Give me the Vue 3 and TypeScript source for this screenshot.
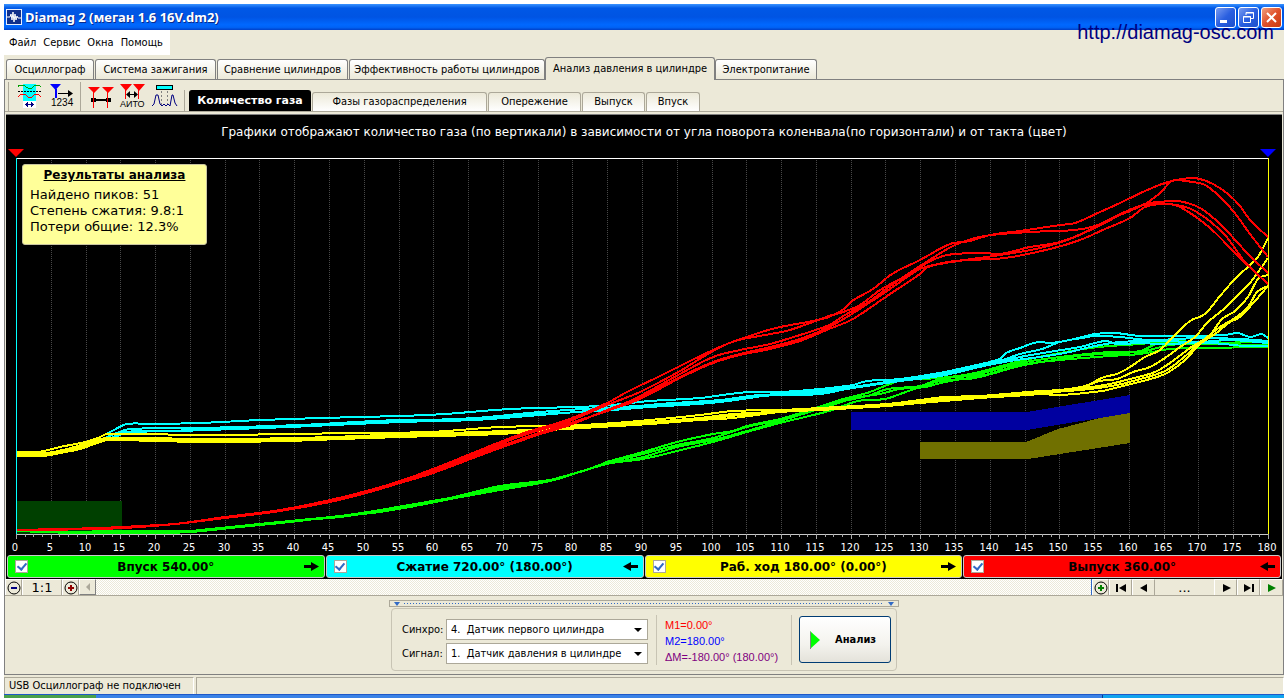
<script setup lang="ts">
import { ref } from 'vue'

type Stroke = { color: string; lines: string[] }

const mainTabs = [
  'Осциллограф',
  'Система зажигания',
  'Сравнение цилиндров',
  'Эффективность работы цилиндров',
  'Анализ давления в цилиндре',
  'Электропитание',
]
const activeMain = ref(4)

const subTabs = ['Количество газа', 'Фазы газораспределения', 'Опережение', 'Выпуск', 'Впуск']
const activeSub = ref(0)

const phases = ref([
  { id: 'intake', label: 'Впуск 540.00°', tone: 'green', forward: true, on: true },
  { id: 'compression', label: 'Сжатие 720.00° (180.00°)', tone: 'cyan', forward: false, on: true },
  { id: 'power', label: 'Раб. ход 180.00° (0.00°)', tone: 'yellow', forward: true, on: true },
  { id: 'exhaust', label: 'Выпуск 360.00°', tone: 'red', forward: false, on: true },
])

const sensors = ['1.\u00a0\u00a0Датчик давления в цилиндре', '4.\u00a0\u00a0Датчик первого цилиндра']
const sync = ref(sensors[1])
const signal = ref(sensors[0])

const degX = (d: number): number => Math.round(16 + (d * 1252) / 180)
const majors = Array.from({ length: 37 }, (_, i) => i * 5)
const minors = Array.from({ length: 144 }, (_, i) => i * 1.25).filter((d) => d % 5 !== 0)

// Smooth curve through the sample points: each tangent is the mean slope of the two neighbours.
function curve(samples: string): string {
  const pts = samples.split(' ').map((p) => p.split(',').map(Number))
  const slope = (i: number): number => {
    const a = pts[Math.max(i - 1, 0)]
    const b = pts[Math.min(i + 1, pts.length - 1)]
    return (b[1] - a[1]) / (b[0] - a[0])
  }
  let d = `M${pts[0][0]} ${pts[0][1]}`
  for (let i = 1; i < pts.length; i++) {
    const [x0, y0] = pts[i - 1]
    const [x1, y1] = pts[i]
    const h = (x1 - x0) / 3
    d += `C${x0 + h} ${y0 + slope(i - 1) * h} ${x1 - h} ${y1 - slope(i) * h} ${x1} ${y1}`
  }
  return d
}

const strokes: Stroke[] = [
  {
    color: '#00ff00',
    lines: [
      '16,531 60,532 120,531 190,531 200,530 240,526 290,521 340,516 380,511 410,507 450,498 500,486 550,480 570,475 600,465 607,462 643,452 677,442 713,434 733,431 747,426 780,419 813,409 843,399 867,393 885,386 903,380 940,378 975,373 1020,361 1060,353 1090,348 1110,346 1140,344 1170,341 1200,342 1230,340 1268,341',
      '16,531 60,532 150,533 190,532 240,527 290,522 340,516 380,512 450,499 500,487 550,481 607,463 643,454 677,445 713,438 747,427 780,420 813,411 830,404 867,396 888,389 920,386 940,379 975,375 1020,363 1060,357 1110,352 1140,352 1170,345 1200,344 1268,345',
      '16,531 80,533 190,532 240,526 290,521 340,516 380,510 450,498 500,489 550,480 607,464 643,457 677,447 713,440 747,431 780,421 829,406 855,398 880,394 900,389 925,387 945,382 985,375 1020,365 1060,360 1110,356 1140,354 1170,349 1200,348 1268,347',
      '190,532 240,527 290,521 340,517 380,511 450,499 500,490 550,481 607,464 643,459 677,451 713,442 747,432 780,423 829,411 858,401 885,399 903,393 940,381 975,378 1020,366 1060,359 1085,355 1110,354 1140,351 1160,343 1200,343 1268,342',
    ],
  },
  {
    color: '#00ffff',
    lines: [
      '98,438 112,431 127,424 150,424 200,423 260,420 320,418 400,416 445,414 510,409 600,406 650,401 700,398 730,394 750,392 780,392 820,389 853,385 867,381 900,379 945,372 963,368 1000,359 1006,353 1020,348 1038,342 1050,343 1065,341 1078,338 1095,334 1115,333 1140,336 1180,336 1225,335 1238,333 1250,337 1262,334 1268,338',
      '105,438 117,433 130,429 200,428 300,425 400,420 440,421 475,419 540,414 600,411 650,407 710,403 750,398 780,393 820,391 853,387 900,380 945,373 975,367 1000,361 1020,354 1042,349 1060,342 1082,338 1095,336 1120,337 1150,340 1200,338 1240,339 1268,341',
      '109,439 125,432 180,431 290,427 400,422 475,420 540,415 600,410 660,404 720,400 760,395 820,393 853,388 900,381 945,375 963,371 1000,362 1020,357 1055,351 1080,347 1105,341 1117,344 1140,343 1160,344 1210,343 1245,346 1268,346',
      '112,439 125,433 200,430 300,426 400,421 475,418 540,412 600,408 660,405 720,402 760,396 820,394 860,386 900,381 940,376 963,370 1010,361 1040,357 1070,352 1090,347 1120,342 1160,341 1200,342 1230,340 1268,343',
    ],
  },
  {
    color: '#ffff00',
    lines: [
      '16,452 38,452 60,447 85,442 98,438 107,434 200,435 295,434 350,433 430,432 500,427 550,426 600,424 650,420 700,415 733,411 780,410 820,408 887,404 920,400 945,397 980,396 1040,391 1060,390 1085,386 1104,377 1117,374 1130,367 1145,357 1160,350 1173,337 1190,321 1205,314 1220,296 1235,279 1250,265 1258,257 1268,238',
      '16,454 46,453 67,449 94,441 106,438 155,438 190,439 240,439 300,438 360,436 400,434 450,433 550,429 600,425 650,422 700,418 733,414 780,412 820,409 887,405 920,402 980,397 1040,393 1080,388 1100,381 1117,379 1133,372 1150,367 1165,358 1180,347 1195,337 1207,323 1225,308 1233,300 1250,283 1268,258',
      '16,456 43,456 60,453 80,449 100,442 109,440 155,441 200,442 223,442 287,441 340,439 400,437 500,434 550,430 600,427 650,424 700,420 733,418 780,412 820,410 887,406 920,403 980,398 1040,394 1085,388 1110,384 1130,379 1155,372 1170,363 1190,348 1210,335 1222,319 1235,311 1248,297 1258,279 1268,275',
      '16,455 45,455 75,448 105,439 200,440 300,438 400,436 500,432 600,426 700,418 780,411 820,409 887,404 950,398 1040,393 1090,389 1117,385 1133,381 1165,371 1183,358 1200,343 1220,327 1235,318 1248,307 1257,292 1268,286',
      '16,456 45,455 75,450 107,440 200,441 300,439 400,436 500,433 600,426 700,419 780,411 820,409 887,406 950,398 1040,394 1060,395 1102,391 1115,388 1135,383 1165,374 1185,360 1200,344 1215,334 1230,322 1240,317 1255,301 1268,286',
    ],
  },
  {
    color: '#ff0000',
    lines: [
      '16,530 60,529 100,528 140,526 175,524 225,517 280,510 330,500 370,490 400,481 433,469 500,442 527,432 567,420 607,403 627,392 660,376 680,366 713,350 727,344 747,337 765,331 780,327 813,321 829,317 844,309 852,301 873,289 892,274 920,260 950,244 970,241 990,235 1020,231 1060,225 1075,223 1100,212 1120,203 1145,191 1168,182 1190,178 1200,179 1213,184 1228,194 1240,206 1250,220 1268,237',
      '16,530 60,529 100,528 140,526 175,524 225,518 280,511 330,501 370,491 400,482 433,471 500,444 527,434 567,422 607,405 640,392 680,371 713,351 735,341 765,335 790,330 829,316 843,312 860,305 880,290 900,279 920,266 955,245 985,236 1030,232 1075,230 1095,226 1120,215 1145,204 1160,193 1172,181 1185,181 1205,185 1220,197 1234,212 1250,234 1268,257',
      '16,530 100,529 140,527 175,524 225,518 280,511 330,502 370,492 400,483 433,473 500,447 527,437 567,424 607,411 640,396 680,374 713,357 740,350 770,344 800,335 829,325 845,315 867,303 890,286 920,267 940,257 955,254 985,253 1000,254 1030,247 1060,242 1095,228 1120,215 1145,204 1160,202 1178,201 1200,208 1220,224 1250,256 1268,273',
      '280,511 330,501 400,483 433,472 500,446 567,426 607,410 640,397 680,377 713,362 740,354 770,347 800,339 829,327 855,312 890,289 920,269 940,264 965,260 1000,255 1040,248 1075,237 1110,219 1143,205 1170,204 1195,211 1225,235 1245,262 1268,284',
      '330,501 400,483 433,473 500,448 567,425 607,411 640,399 680,378 713,363 740,355 770,349 800,341 829,329 853,319 890,294 920,274 928,267 955,261 1005,258 1050,249 1080,240 1105,229 1130,218 1145,207 1165,204 1180,207 1210,228 1240,258 1268,284',
    ],
  },
]
</script>

<template>
  <div class="desktop">
    <main class="window">
      <header class="titlebar">
        <svg class="app-icon" viewBox="0 0 16 16" aria-hidden="true">
          <rect x="0.5" y="0.5" width="15" height="15" fill="#10308c" stroke="#e8eefc" />
          <path d="M1 8H4L5 5L6 11L7 3L8 13L9 5L10 11L11 7L12 9H15" fill="none" stroke="#fff" />
        </svg>
        <h1>Diamag 2 (меган 1.6 16V.dm2)</h1>
        <button class="caption" type="button" aria-label="Свернуть">
          <svg viewBox="0 0 19 19"><rect x="4" y="12" width="7" height="3" fill="#fff" /></svg>
        </button>
        <button class="caption" type="button" aria-label="Восстановить">
          <svg viewBox="0 0 19 19" fill="none" stroke="#fff">
            <path d="M7 7V4.500H14.500V10.500H12M7 5H15" />
            <path d="M4.500 8.500H11.500V14.500H4.500ZM4 9H12" />
          </svg>
        </button>
        <button class="caption close" type="button" aria-label="Закрыть">
          <svg viewBox="0 0 19 19"><path d="M5 5L14 14M14 5L5 14" stroke="#fff" stroke-width="2" /></svg>
        </button>
      </header>
      <a class="site" href="#">http://diamag-osc.com</a>

      <nav class="menu">
        <button type="button">Файл</button>
        <button type="button">Сервис</button>
        <button type="button">Окна</button>
        <button type="button">Помощь</button>
      </nav>

      <div class="main-tabs" role="tablist">
        <button
          v-for="(tab, i) in mainTabs"
          :key="tab"
          type="button"
          role="tab"
          :aria-selected="i === activeMain"
          :class="{ active: i === activeMain }"
          @click="activeMain = i"
        >{{ tab }}</button>
      </div>

      <section class="panel">
        <div class="toolbar">
          <div class="tools first">
            <button type="button" aria-label="Период">
              <svg viewBox="0 0 24 24" shape-rendering="crispEdges" fill="none">
                <rect x="6" y="0" width="13" height="18" fill="#00ffff" />
                <rect x="6" y="17" width="13" height="7" fill="#fff" />
                <path d="M1 3L2 1H6L11 4H15L18 1H22L24 3" stroke="#00a000" />
                <path d="M1 7.500H24" stroke="#000" stroke-dasharray="2 1" />
                <path d="M1 13L4 10H8L11 13H15L18 10H21L24 13" stroke="#ff0000" />
                <path d="M8 20.500H17M9.500 19V22M15.500 19V22M10.500 18V23M14.500 18V23" stroke="#000080" />
              </svg>
            </button>
            <button type="button" aria-label="Нумерация">
              <svg viewBox="0 0 24 24">
                <path d="M-1 0H10L4.500 6Z" fill="#0000ff" />
                <path d="M4.500 5V14" stroke="#0000ff" stroke-width="2" shape-rendering="crispEdges" />
                <path d="M7 9.500H18" stroke="#000" shape-rendering="crispEdges" />
                <path d="M17 6L22 9.500L17 13Z" />
                <text x="0" y="22" font-size="10">1234</text>
              </svg>
            </button>
          </div>
          <div class="tools second">
            <button type="button" aria-label="Маркеры">
              <svg viewBox="0 0 26 26">
                <path d="M0 3H12L6 9ZM14 3H26L20 9Z" fill="#ff0000" />
                <path d="M3 14H8V18H3ZM18 14H23V18H18Z" />
                <path d="M8 16H18" stroke="#000" stroke-width="2" shape-rendering="crispEdges" />
                <path d="M5.500 7V24M19.500 7V24" stroke="#ff0000" shape-rendering="crispEdges" />
              </svg>
            </button>
            <button type="button" aria-label="Автоматические маркеры">
              <svg viewBox="0 0 26 26">
                <path d="M0 0H12L6 7ZM13 0H25L19 7Z" fill="#ff0000" />
                <path d="M5.500 5V15M18.500 5V15" stroke="#ff0000" shape-rendering="crispEdges" />
                <path d="M8 10.500H17" stroke="#000" shape-rendering="crispEdges" />
                <path d="M6 10.500L10 7V14ZM18 10.500L14 7V14Z" />
                <text x="0" y="23" font-size="9">АИТО</text>
              </svg>
            </button>
            <button type="button" aria-label="Область">
              <svg viewBox="0 0 26 26" fill="none">
                <rect x="4.500" y="1.500" width="16" height="4" fill="#00ffff" stroke="#000" shape-rendering="crispEdges" />
                <path d="M9.500 7V22M15.500 7V22" stroke="#808080" stroke-dasharray="2 2" shape-rendering="crispEdges" />
                <path d="M0 22L2 20L4 11H6L8 20L10 22L12 20L14 22L16 20L18 22L20 11H21L23 19L25 22" stroke="#000080" />
              </svg>
            </button>
          </div>
          <div class="sub-tabs" role="tablist">
            <button
              v-for="(tab, i) in subTabs"
              :key="tab"
              type="button"
              role="tab"
              :aria-selected="i === activeSub"
              :class="{ active: i === activeSub }"
              @click="activeSub = i"
            >{{ tab }}</button>
          </div>
        </div>

        <div class="scope">
          <svg class="plot" viewBox="6 115 1276 440">
            <text class="caption-text" x="644" y="136" text-anchor="middle">Графики отображают количество газа (по вертикали) в зависимости от угла поворота коленвала(по горизонтали) и от такта (цвет)</text>
            <path d="M8 149H24L16 157Z" fill="#ff0000" />
            <path d="M1260 149H1276L1268 157Z" fill="#0000ff" />
            <g shape-rendering="crispEdges" fill="none">
              <path
                v-for="d in majors.slice(1, -1)"
                :key="'g' + d"
                :d="`M${degX(d)}.5 160V534`"
                stroke="#484848"
                stroke-dasharray="1 1"
              />
              <rect x="17" y="501" width="105" height="33" fill="#004000" />
              <path d="M851 412H1027L1130 395V413L1027 430H851Z" fill="#0000a0" />
              <path d="M920 442H1026L1058 429L1100 418L1130 413V443L1028 459H920Z" fill="#707000" />
              <g v-for="s in strokes" :key="s.color" :stroke="s.color" stroke-width="2">
                <path v-for="(line, i) in s.lines" :key="i" :d="curve(line)" />
              </g>
              <path d="M16 158.500H1268" stroke="#fff" />
              <path d="M16.500 158V534" stroke="#00ffff" />
              <path d="M1268.500 158V534" stroke="#ffff00" />
              <path d="M16 534.500H1269" stroke="#c8c8c8" />
              <path v-for="d in majors" :key="'t' + d" :d="`M${degX(d)}.5 534V539`" stroke="#a8a8a8" />
              <path v-for="d in minors" :key="'m' + d" :d="`M${degX(d)}.5 534V537`" stroke="#a8a8a8" />
            </g>
            <text
              v-for="d in majors"
              :key="'l' + d"
              class="tick"
              :x="degX(d) - 1"
              y="551"
              text-anchor="middle"
            >{{ d }}</text>
          </svg>

          <aside class="results">
            <h2>Результаты анализа</h2>
            <p>Найдено пиков: 51</p>
            <p>Степень сжатия: 9.8:1</p>
            <p>Потери общие: 12.3%</p>
          </aside>

          <div class="phases">
            <label v-for="p in phases" :key="p.id" :class="['phase', p.tone]">
              <input v-model="p.on" type="checkbox" />
              <span>{{ p.label }}</span>
              <svg viewBox="0 0 15 9" aria-hidden="true">
                <path v-if="p.forward" d="M0 3H7V0L15 4.500L7 9V6H0Z" />
                <path v-else d="M15 3H8V0L0 4.500L8 9V6H15Z" />
              </svg>
            </label>
          </div>
        </div>

        <div class="scroller">
          <button class="w16" type="button" aria-label="Уменьшить">
            <svg viewBox="0 0 14 14"><circle cx="7" cy="7" r="6" fill="none" stroke="#000" /><path d="M4 7H10" stroke="#000080" stroke-width="2" /></svg>
          </button>
          <button class="w40" type="button">1:1</button>
          <button class="w16" type="button" aria-label="Увеличить">
            <svg viewBox="0 0 14 14"><circle cx="7" cy="7" r="6" fill="none" stroke="#000" /><path d="M4 7H10M7 4V10" stroke="#900000" stroke-width="2" /></svg>
          </button>
          <button class="w16 thumb" type="button" aria-label="Прокрутить влево">
            <svg viewBox="0 0 14 14"><path d="M9 3V11L5 7Z" fill="#aca899" /></svg>
          </button>
          <div class="trough"></div>
          <button class="w16" type="button" aria-label="Добавить">
            <svg viewBox="0 0 14 14"><circle cx="7" cy="7" r="6" fill="none" stroke="#000" /><path d="M4 7H10M7 4V10" stroke="#008000" stroke-width="2" /></svg>
          </button>
          <button class="w23" type="button" aria-label="В начало">
            <svg viewBox="0 0 14 14"><path d="M2 3H4V11H2ZM12 3V11L5 7Z" /></svg>
          </button>
          <button class="w23" type="button" aria-label="Назад">
            <svg viewBox="0 0 14 14"><path d="M10 3V11L3 7Z" /></svg>
          </button>
          <button class="w58 flat" type="button">...</button>
          <button class="w23" type="button" aria-label="Вперёд">
            <svg viewBox="0 0 14 14"><path d="M4 3V11L12 7Z" /></svg>
          </button>
          <button class="w23" type="button" aria-label="В конец">
            <svg viewBox="0 0 14 14"><path d="M2 3V11L9 7ZM10 3H12V11H10Z" /></svg>
          </button>
          <button class="w23" type="button" aria-label="Пуск">
            <svg viewBox="0 0 14 14"><path d="M3 3V11L11 7Z" fill="#008000" /></svg>
          </button>
        </div>

        <div class="dock">
          <div class="grip">
            <svg viewBox="0 0 6 4"><path d="M0 0H6L3 4Z" /></svg>
            <i></i>
            <svg viewBox="0 0 6 4"><path d="M0 0H6L3 4Z" /></svg>
          </div>
          <div class="controls">
            <div class="fields">
              <label for="sync">Синхро:</label>
              <div class="combo">
                <select id="sync" v-model="sync">
                  <option v-for="s in sensors" :key="s" :value="s">{{ s }}</option>
                </select>
                <svg viewBox="0 0 8 4"><path d="M0 0H8L4 4Z" /></svg>
              </div>
              <label for="signal">Сигнал:</label>
              <div class="combo">
                <select id="signal" v-model="signal">
                  <option v-for="s in sensors" :key="s" :value="s">{{ s }}</option>
                </select>
                <svg viewBox="0 0 8 4"><path d="M0 0H8L4 4Z" /></svg>
              </div>
            </div>
            <div class="markers">
              <p class="m1">M1=0.00°</p>
              <p class="m2">M2=180.00°</p>
              <p class="dm">ΔM=-180.00° (180.00°)</p>
            </div>
            <button class="analyze" type="button">
              <svg viewBox="0 0 10 18"><path d="M0 0L10 9L0 18Z" fill="#00ff00" /><path d="M0.500 1V18" stroke="#808080" /></svg>
              Анализ
            </button>
          </div>
        </div>
      </section>

      <footer class="status">
        <p>USB Осциллограф не подключен</p>
        <p></p>
      </footer>
      <div class="taskbar"><i></i><b></b></div>
    </main>
  </div>
</template>

<style>
body {
  background: #fff;
}
</style>

<style scoped>
* {
  box-sizing: border-box;
  margin: 0;
}
.desktop {
  height: 100vh;
  padding: 4px 4px 0;
  overflow: hidden;
}
.window {
  position: relative;
  display: flex;
  flex-direction: column;
  height: 100%;
  background: #ece9d8;
  color: #000;
  font: 11px/14px "DejaVu Sans Condensed", "DejaVu Sans", sans-serif;
}
button {
  padding: 0;
  border: 0;
  background: none;
  color: inherit;
  font: inherit;
  white-space: nowrap;
}
svg {
  display: block;
}
.titlebar {
  display: flex;
  align-items: center;
  gap: 2px;
  height: 26px;
  padding: 0 2px;
  background: linear-gradient(#3a93ff, #0058e6 16%, #0054e3 50%, #0068ff 80%, #0062f5 90%, #0040c8);
}
.app-icon {
  width: 16px;
  height: 16px;
}
h1 {
  flex: 1;
  padding-left: 1px;
  color: #fff;
  font: bold 13px/18px "Noto Sans", "Open Sans", sans-serif;
  text-shadow: 1px 1px #0a2a8c;
}
.caption {
  width: 21px;
  height: 21px;
  border: 1px solid #fff;
  border-radius: 3px;
  background: linear-gradient(135deg, #7a9cf0, #2a5fe0 50%, #1c50cc);
}
.close {
  background: linear-gradient(135deg, #f0a080, #e0502a 50%, #c83a10);
}
.site {
  position: absolute;
  top: 16px;
  right: 10px;
  color: #000080;
  font: 20px/24px "Liberation Sans", Arial, sans-serif;
  text-decoration: none;
}
.menu {
  display: flex;
  align-items: center;
  align-self: flex-start;
  gap: 7px;
  height: 25px;
  padding: 0 7px 0 5px;
  background: #fff;
}
.main-tabs {
  display: grid;
  grid-template-columns: 88px 121px 131px 196px 168px 102px;
  column-gap: 1px;
  align-items: end;
  height: 24px;
  padding-left: 2px;
}
.main-tabs button {
  height: 20px;
  border: 1px solid #808080;
  border-bottom: 0;
  border-radius: 3px 3px 0 0;
  background: linear-gradient(#fff, #ece9d8);
}
.main-tabs .active {
  z-index: 1;
  height: 23px;
  margin: 0 -1px -1px;
  background: #ece9d8;
}
.panel {
  display: flex;
  flex: 1;
  flex-direction: column;
  border: 1px solid #808080;
}
.toolbar {
  display: flex;
  align-items: flex-end;
  height: 32px;
  padding-left: 3px;
  border-bottom: 1px solid #aca899;
}
.tools {
  display: flex;
  height: 29px;
  padding-top: 2px;
  border-left: 1px solid #aca899;
}
.tools svg {
  width: 26px;
  height: 26px;
  overflow: visible;
}
.tools.first svg {
  width: 24px;
  height: 24px;
}
.tools text {
  font-family: "Liberation Sans", sans-serif;
}
.first {
  gap: 10px;
  width: 72px;
  padding-left: 8px;
}
.second {
  gap: 6px;
  width: 104px;
  padding-left: 7px;
}
.tools button {
  align-self: flex-start;
}
.sub-tabs {
  display: grid;
  grid-template-columns: 122px 175px 93px 63px 54px;
  column-gap: 1px;
  align-items: end;
  padding-left: 4px;
  border-left: 1px solid #aca899;
}
.sub-tabs button {
  height: 19px;
  border: 1px solid #aca899;
  border-bottom: 0;
  border-radius: 3px 3px 0 0;
  background: linear-gradient(#ece9d8, #fff);
}
.sub-tabs .active {
  height: 21px;
  border-color: #000;
  background: #000;
  color: #fff;
  font: bold 11px/14px "DejaVu Sans", sans-serif;
}
.scope {
  position: relative;
  margin: 2px 1px 0;
  border-top: 1px solid #808080;
  background: #000;
}
.plot {
  width: 100%;
}
.caption-text {
  fill: #fff;
  font: 12px "DejaVu Sans", sans-serif;
}
.tick {
  fill: #fff;
  font: 11px "DejaVu Sans Condensed", "DejaVu Sans", sans-serif;
}
.results {
  position: absolute;
  top: 49px;
  left: 16px;
  width: 185px;
  height: 81px;
  padding: 2px 7px;
  border: 1px solid #c8c4a0;
  border-radius: 3px;
  background: #ffff99;
  font: 13px/16px "DejaVu Sans", sans-serif;
  white-space: nowrap;
}
h2 {
  margin-bottom: 4px;
  font: bold 12px/16px "DejaVu Sans", sans-serif;
  text-align: center;
  text-decoration: underline;
}
.phases {
  display: grid;
  grid-template-columns: repeat(4, 1fr);
  gap: 1px;
  padding: 0 1px 1px;
}
.phase {
  display: flex;
  align-items: center;
  height: 23px;
  padding: 0 5px 0 7px;
  border: 1px solid #c8c8c8;
  border-radius: 3px;
  font: bold 12px/16px "DejaVu Sans", sans-serif;
}
.phase span {
  flex: 1;
  text-align: center;
}
.phase svg {
  width: 15px;
  height: 9px;
}
.green { background: #00ff00; }
.cyan { background: #00ffff; }
.yellow { background: #ffff00; }
.red { background: #ff0000; }
.phase input {
  display: grid;
  place-items: center;
  width: 13px;
  height: 13px;
  border: 1px solid #aca899;
  background: #fff;
  appearance: none;
}
.phase input:checked::before {
  width: 4px;
  height: 7px;
  border: solid #316ac5;
  border-width: 0 2px 2px 0;
  content: "";
  transform: translateY(-1px) rotate(40deg);
}
.scroller {
  display: flex;
  height: 17px;
  border-bottom: 1px solid #aca899;
}
.scroller button {
  display: grid;
  place-items: center;
  border: solid #fff;
  border-width: 1px 1px 0 1px;
  border-right-color: #aca899;
  font: 13px/14px "DejaVu Sans", sans-serif;
}
.scroller svg {
  width: 14px;
  height: 14px;
}
.scroller .flat {
  border-color: #ece9d8;
}
.scroller .thumb {
  border-width: 1px;
  border-color: #fff #808080 #808080 #fff;
}
.w16 { width: 17px; }
.w40 { width: 40px; }
.w23 { width: 23px; }
.w58 { width: 59px; }
.trough {
  flex: 1;
  border-right: 1px solid #316ac5;
  background: repeating-conic-gradient(#ece9d8 0 25%, #fff 0 50%) 0 0 / 2px 2px;
}
.dock {
  display: flex;
  flex-direction: column;
  align-items: center;
  padding-top: 4px;
}
.grip {
  display: flex;
  gap: 4px;
  align-items: center;
  width: 510px;
  height: 7px;
  padding: 0 4px;
  border: 1px solid #aca899;
}
.grip svg {
  width: 6px;
  height: 4px;
  fill: #316ac5;
}
.grip i {
  flex: 1;
  height: 1px;
  background: repeating-linear-gradient(90deg, #316ac5 0 1px, transparent 1px 3px);
}
.controls {
  display: flex;
  align-items: center;
  width: 506px;
  height: 63px;
  margin-top: 1px;
  padding: 0 5px 0 10px;
  border: 1px solid #c8c4b4;
  border-radius: 4px;
}
.fields {
  display: grid;
  grid-template-columns: 44px 202px;
  row-gap: 3px;
  align-items: center;
  padding-top: 4px;
}
.combo {
  position: relative;
}
.combo svg {
  position: absolute;
  top: 9px;
  right: 6px;
  width: 8px;
  height: 4px;
  pointer-events: none;
}
select {
  display: block;
  width: 100%;
  height: 21px;
  padding: 0 16px 0 4px;
  border: 1px solid #aca899;
  border-radius: 0;
  background: #fff;
  color: #000;
  font: inherit;
  appearance: none;
}
.markers {
  width: 136px;
  height: 50px;
  margin: 0 7px 0 8px;
  padding: 2px 0 0 8px;
  border: solid #c8c4b4;
  border-width: 0 1px;
  font: 11px/16px "Liberation Sans", Arial, sans-serif;
  white-space: nowrap;
}
.m1 { color: #ff0000; }
.m2 { color: #0000ff; }
.dm { color: #800080; }
.analyze {
  display: flex;
  gap: 15px;
  align-items: center;
  width: 92px;
  height: 47px;
  padding-left: 10px;
  border: 1px solid #003c74;
  border-radius: 3px;
  background: linear-gradient(#fff, #f4f3ee 60%, #e4e2da);
  font-weight: bold;
}
.analyze svg {
  width: 10px;
  height: 18px;
}
.status {
  display: grid;
  grid-template-columns: 190px 1fr;
  gap: 2px;
  height: 19px;
  padding-top: 2px;
}
.status p {
  padding: 1px 4px;
  border: solid #aca899;
  border-width: 1px 1px 0 1px;
  border-right-color: #fff;
}
.taskbar {
  display: flex;
  height: 4px;
  border-top: 1px solid #1f58c8;
  background: #3a82e6;
}
.taskbar i {
  width: 92px;
  background: #4aa04a;
}
.taskbar b {
  width: 182px;
  margin-left: auto;
  border-left: 1px solid #0a3a90;
  background: #12a4ee;
}
</style>
